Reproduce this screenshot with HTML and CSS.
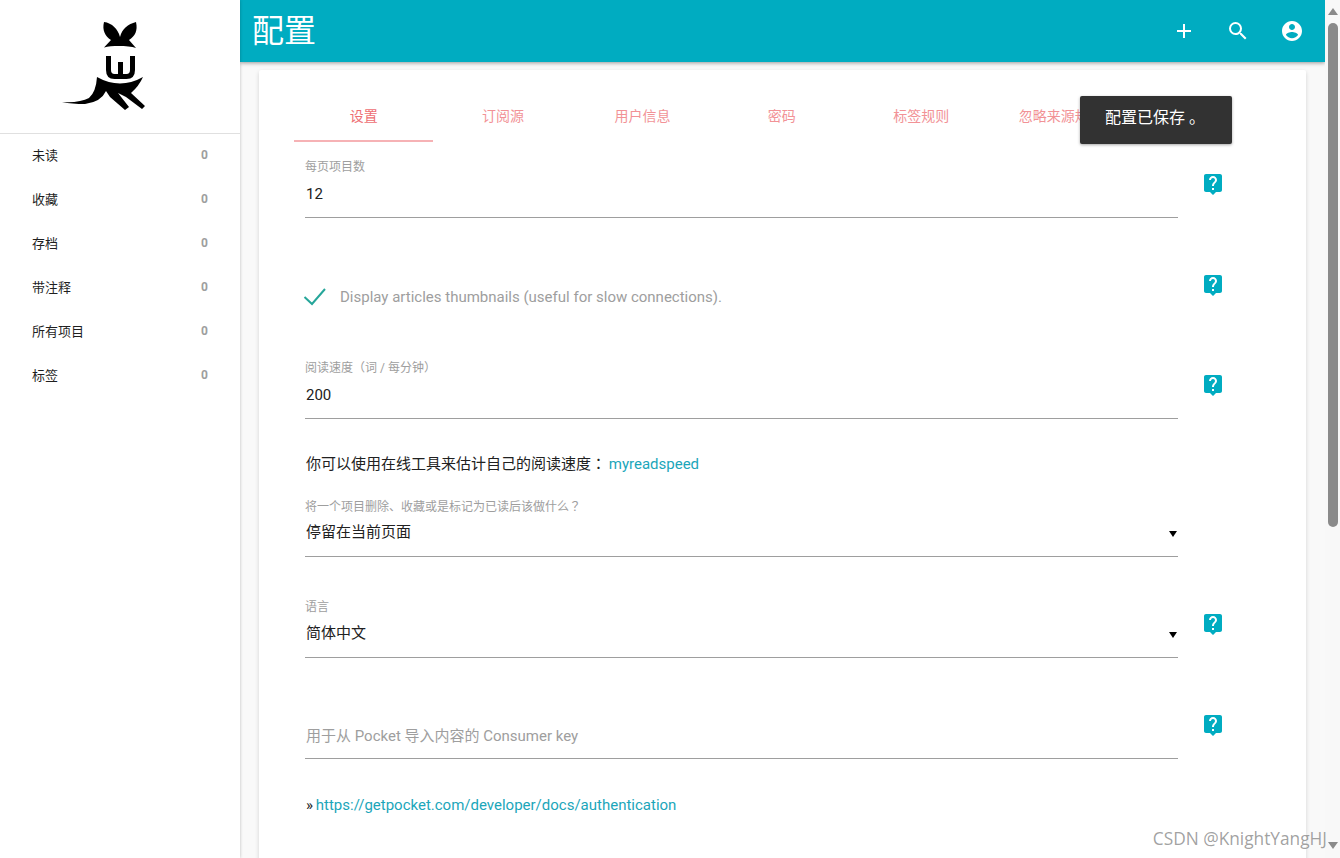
FILE: index.html
```html
<!DOCTYPE html>
<html lang="zh-CN">
<head>
<meta charset="utf-8">
<title>配置</title>
<link rel="stylesheet" href="styles.css">
</head>
<body>
<div class="app">
  <aside class="sidebar">
    <div class="logo-box">
      <svg class="logo" viewBox="60 20 90 95" width="90" height="95" aria-label="wallabag">
        <path d="M104 22C112 23 118 29 120 37C122 29 128 24 136 22C138 31 135 36 129 40L136 48C128 45.500 112 45.500 104 47.500L111 40C105 36 102 30 104 22Z"/>
        <path class="logo-w" d="M108.500 56V70Q108.500 76.500 114.500 76.500H126.500Q132.500 76.500 132.500 70V56M120.500 62V76"/>
        <path d="M97 77Q120 90 143 77Q139 86 131 93L145 106L142 109L126 97L118 93L129 107L125 110L110 97L106 91Q101 102 85 104Q72 104 62 102Q80 103 89 98Q96 92 97 77Z"/>
      </svg>
    </div>
    <nav class="menu">
      <a class="menu-item"><span class="menu-text">未读</span><b class="count">0</b></a>
      <a class="menu-item"><span class="menu-text">收藏</span><b class="count">0</b></a>
      <a class="menu-item"><span class="menu-text">存档</span><b class="count">0</b></a>
      <a class="menu-item"><span class="menu-text">带注释</span><b class="count">0</b></a>
      <a class="menu-item"><span class="menu-text">所有项目</span><b class="count">0</b></a>
      <a class="menu-item"><span class="menu-text">标签</span><b class="count">0</b></a>
    </nav>
  </aside>
  <main class="main">
    <header class="topbar">
      <h1 class="title">配置</h1>
      <div class="actions">
        <svg class="action" viewBox="0 0 24 24"><path d="M19 13h-6v6h-2v-6H5v-2h6V5h2v6h6v2z"/></svg>
        <svg class="action" viewBox="0 0 24 24"><path d="M15.500 14h-.79l-.28-.27A6.470 6.470 0 0 0 16 9.500 6.500 6.500 0 1 0 9.500 16c1.610 0 3.090-.59 4.230-1.570l.27.28v.79l5 4.990L20.490 19l-4.990-5zm-6 0C7.010 14 5 11.990 5 9.500S7.010 5 9.500 5 14 7.010 14 9.500 11.990 14 9.500 14z"/></svg>
        <svg class="action" viewBox="0 0 24 24"><path d="M12 2C6.480 2 2 6.480 2 12s4.480 10 10 10 10-4.480 10-10S17.520 2 12 2zm0 3c1.660 0 3 1.340 3 3s-1.340 3-3 3-3-1.340-3-3 1.340-3 3-3zm0 14.200c-2.500 0-4.710-1.280-6-3.220.03-1.990 4-3.080 6-3.080 1.990 0 5.970 1.090 6 3.080-1.290 1.940-3.500 3.220-6 3.220z"/></svg>
      </div>
    </header>
    <section class="card">
      <div class="tabs">
        <a class="tab tab-active">设置</a>
        <a class="tab">订阅源</a>
        <a class="tab">用户信息</a>
        <a class="tab">密码</a>
        <a class="tab">标签规则</a>
        <a class="tab">忽略来源规则</a>
      </div>
      <div class="form">
        <div class="row">
          <div class="field">
            <div class="label">每页项目数</div>
            <div class="value">12</div>
          </div>
          <svg class="help" viewBox="0 0 24 24"><use href="#help-icon"/></svg>
        </div>
        <div class="row row-check">
          <div class="check-line">
            <svg class="check" viewBox="0 0 24 20"><path d="M1.500 10L9 17L22 2"/></svg>
            <span class="check-text">Display articles thumbnails (useful for slow connections).</span>
          </div>
          <svg class="help" viewBox="0 0 24 24"><use href="#help-icon"/></svg>
        </div>
        <div class="row row-tight">
          <div class="field">
            <div class="label">阅读速度（词 / 每分钟）</div>
            <div class="value">200</div>
          </div>
          <svg class="help" viewBox="0 0 24 24"><use href="#help-icon"/></svg>
        </div>
        <p class="note note-speed">你可以使用在线工具来估计自己的阅读速度<span class="punct" lang="zh-TW">：</span> <a class="link">myreadspeed</a></p>
        <div class="row">
          <div class="field">
            <div class="label">将一个项目删除、收藏或是标记为已读后该做什么<span class="punct" lang="zh-TW">？</span></div>
            <div class="value"><span class="select-text">停留在当前页面</span><span class="arrow"></span></div>
          </div>
        </div>
        <div class="row">
          <div class="field">
            <div class="label">语言</div>
            <div class="value"><span class="select-text">简体中文</span><span class="arrow"></span></div>
          </div>
          <svg class="help" viewBox="0 0 24 24"><use href="#help-icon"/></svg>
        </div>
        <div class="row row-tight">
          <div class="field">
            <div class="label"></div>
            <div class="value value-empty">用于从 Pocket 导入内容的 Consumer key</div>
          </div>
          <svg class="help" viewBox="0 0 24 24"><use href="#help-icon"/></svg>
        </div>
        <p class="note">» <a class="link">https://getpocket.com/developer/docs/authentication</a></p>
      </div>
    </section>
    <div class="toast">配置已保存<span class="toast-stop">。</span></div>
  </main>
  <div class="scrollbar">
    <span class="sb-up"></span>
    <span class="sb-thumb"></span>
    <span class="sb-down"></span>
  </div>
</div>
<div class="watermark">CSDN @KnightYangHJ</div>
<svg class="defs" width="0" height="0">
  <symbol id="help-icon" viewBox="0 0 24 24">
    <path d="M19 2H5c-1.110 0-2 .9-2 2v14c0 1.100.89 2 2 2h4l3 3 3-3h4c1.100 0 2-.9 2-2V4c0-1.100-.9-2-2-2zm-6 16h-2v-2h2v2zm2.070-7.750l-.9.92C13.450 11.900 13 12.500 13 14h-2v-.5c0-1.100.45-2.100 1.170-2.830l1.240-1.260c.37-.36.59-.86.59-1.410 0-1.100-.9-2-2-2s-2 .9-2 2H8c0-2.210 1.790-4 4-4s4 1.790 4 4c0 .88-.36 1.680-.93 2.250z"/>
  </symbol>
</svg>
</body>
</html>
```
FILE: styles.css
```css
* { box-sizing: border-box; }
html, body { margin: 0; height: 100%; overflow: hidden; }
body {
  font-family: Roboto, "Noto Sans CJK SC", sans-serif;
  font-size: 15px;
  color: #212121;
  background: #fff;
}
.app { display: flex; height: 858px; }
.sidebar {
  width: 240px;
  flex: none;
  background: #fff;
  box-shadow: 0 0 3px rgba(0, 0, 0, .25);
  position: relative;
  z-index: 2;
}
.logo-box {
  height: 134px;
  border-bottom: 1px solid #e0e0e0;
  padding: 20px 0 0 60px;
}
.logo { display: block; fill: #000; }
.logo-w { fill: none; stroke: #000; stroke-width: 5; }
.menu-item {
  display: flex;
  justify-content: space-between;
  align-items: center;
  height: 44px;
  padding: 0 32px 2px;
  font-size: 13px;
  color: #1f1f1f;
}
.menu-text { margin-bottom: 2px; }
.count { font-size: 12px; color: #9e9e9e; font-weight: 700; }
.main {
  position: relative;
  width: 1085px;
  flex: none;
  background: #f9f9f9;
  overflow: hidden;
}
.topbar {
  height: 62px;
  background: #00acc1;
  box-shadow: 0 1px 4px rgba(0, 0, 0, .4);
  display: flex;
  align-items: center;
  justify-content: space-between;
  padding: 0 21px 0 12px;
  position: relative;
  z-index: 1;
}
.title {
  margin: 0;
  font-size: 32px;
  font-weight: 400;
  color: #fff;
  line-height: 62px;
}
.actions { display: flex; gap: 30px; align-items: center; }
.action { width: 24px; height: 24px; fill: #fff; display: block; }
.card {
  margin: 8px 19px 0;
  padding: 22px 0 0 35px;
  background: #fff;
  border-radius: 2px;
  box-shadow: 0 2px 4px rgba(0, 0, 0, .16);
  height: 900px;
}
.tabs { display: flex; height: 50px; }
.tab {
  width: 139.400px;
  flex: none;
  height: 50px;
  line-height: 48px;
  text-align: center;
  font-size: 14px;
  color: #ee6e73;
  opacity: .75;
}
.tab-active {
  opacity: 1;
  border-bottom: 2px solid #f6b2b5;
}
.form { margin: 16px 0 0 11px; }
.row {
  display: flex;
  gap: 23px;
  height: 60px;
  margin-bottom: 41px;
}
.row-check { height: 59px; }
.row-tight { margin-bottom: 0; }
.field, .check-line { width: 873px; flex: none; }
.label {
  height: 16px;
  font-size: 12px;
  line-height: 18px;
  color: #9e9e9e;
}
.value {
  height: 44px;
  padding: 0 0 4px 1px;
  line-height: 38px;
  border-bottom: 1px solid #9e9e9e;
  font-size: 15px;
  color: #212121;
  display: flex;
  justify-content: space-between;
  align-items: center;
}
.value-empty { color: #9e9e9e; padding-bottom: 2px; }
.select-text { margin-bottom: 2px; }
.arrow {
  width: 0;
  height: 0;
  margin: 2px 1px 0 0;
  border-left: 4px solid transparent;
  border-right: 4px solid transparent;
  border-top: 6px solid #000;
}
.help {
  width: 24px;
  height: 24px;
  margin-top: 14px;
  fill: #00acc1;
  flex: none;
}
.check-line {
  display: flex;
  align-items: center;
  height: 24px;
  margin-top: 26px;
  color: #9e9e9e;
}
.check {
  width: 24px;
  height: 20px;
  margin-left: -2px;
  fill: none;
  stroke: #26a69a;
  stroke-width: 2;
  flex: none;
}
.check-text { margin-left: 13px; font-size: 15px; }
.note {
  margin: 0;
  height: 78px;
  padding: 35px 0 0 1px;
  line-height: 22px;
  font-size: 15px;
  color: #212121;
}
.note-speed { padding-top: 33px; height: 78px; }
.link { color: #1ba6ba; font-size: 15px; margin-left: -1px; }
.punct { font-family: "Noto Sans CJK TC", sans-serif; }
.toast {
  position: absolute;
  left: 840px;
  top: 96px;
  width: 152px;
  height: 48px;
  padding-left: 25px;
  line-height: 44px;
  font-size: 16px;
  color: #fff;
  background: #323232;
  border-radius: 2px;
  box-shadow: 0 1px 3px rgba(0, 0, 0, .35);
}
.toast-stop { margin-left: 4px; }
.scrollbar {
  width: 15px;
  flex: none;
  background: #f8f8f8;
  display: flex;
  flex-direction: column;
  align-items: center;
  padding-top: 8px;
}
.sb-up, .sb-down {
  width: 0;
  height: 0;
  border-left: 5px solid transparent;
  border-right: 5px solid transparent;
}
.sb-up { border-bottom: 7px solid #8a8a8a; }
.sb-thumb {
  width: 10px;
  height: 504px;
  margin-top: 8px;
  background: #8a8a8a;
  border-radius: 5px;
}
.sb-down {
  margin-top: auto;
  margin-bottom: 9px;
  border-top: 7px solid #8a8a8a;
}
.watermark {
  position: absolute;
  right: 13px;
  top: 828px;
  font-size: 17.300px;
  line-height: 22px;
  color: rgba(120, 120, 120, .7);
  text-shadow: 0 0 2px rgba(255, 255, 255, .8);
  font-family: "Open Sans", sans-serif;
}
.defs { position: absolute; }
```
